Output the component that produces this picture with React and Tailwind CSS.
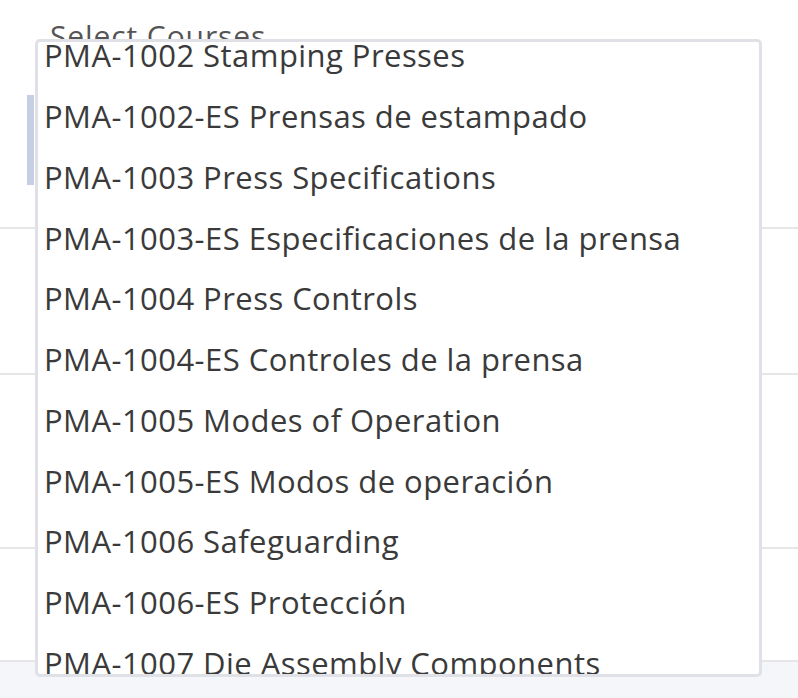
import React from 'react';

const courses = [
    'PMA-1002 Stamping Presses',
    'PMA-1002-ES Prensas de estampado',
    'PMA-1003 Press Specifications',
    'PMA-1003-ES Especificaciones de la prensa',
    'PMA-1004 Press Controls',
    'PMA-1004-ES Controles de la prensa',
    'PMA-1005 Modes of Operation',
    'PMA-1005-ES Modos de operación',
    'PMA-1006 Safeguarding',
    'PMA-1006-ES Protección',
    'PMA-1007 Die Assembly Components',
];

const App = () => {
    return (
        <div
            className="relative w-[798px] h-[698px] overflow-hidden bg-white flex flex-col"
            style={{ fontFamily: '"Open Sans", "Noto Sans", sans-serif' }}
        >
            {/* Page behind the menu */}
            <div className="h-[95px] pl-[50px] pt-[17px]">
                <span className="text-[30px] leading-[38px] tracking-[0.9px] text-[#555]">Select Courses</span>
            </div>
            <div className="h-[90px] flex">
                <div className="ml-[27px] w-[7px] bg-[#c6d0e2]" />
            </div>
            <div className="h-[44px] border-b-2 border-[#e6e6e6]" />
            <div className="h-[146px] border-b-2 border-[#e6e6e6]" />
            <div className="h-[174px] border-b-2 border-[#e6e6e6]" />
            <div className="flex-1" />
            <div className="h-[38px] border-t-2 border-[#e6e6e6] bg-[#f5f6fa]" />

            {/* Open select menu */}
            <div className="absolute left-[35px] top-[39px] w-[727px] h-[638px] border-[3px] border-[#dfe1e6] rounded-[5px] bg-white overflow-hidden">
                <ul className="mt-[-17px]">
                    {courses.map((c) => (
                        <li
                            key={c}
                            className="h-[60.75px] flex items-center pl-[6px] text-[31px] leading-[40px] tracking-[0.45px] text-[#3a3a3a] whitespace-nowrap"
                        >
                            {c}
                        </li>
                    ))}
                </ul>
            </div>
        </div>
    );
};

export default App;
